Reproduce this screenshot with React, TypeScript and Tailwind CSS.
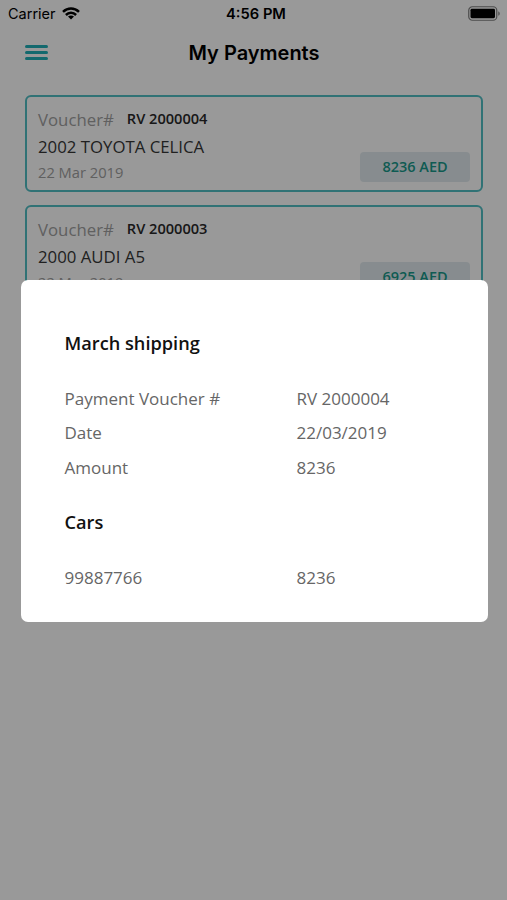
import React from "react";

type Payment = {
  voucher: string;
  car: string;
  date: string;
  amount: string;
};

const payments: Payment[] = [
  { voucher: "RV 2000004", car: "2002 TOYOTA CELICA", date: "22 Mar 2019", amount: "8236 AED" },
  { voucher: "RV 2000003", car: "2000 AUDI A5", date: "22 Mar 2019", amount: "6925 AED" },
];

const details = [
  { label: "Payment Voucher #", value: "RV 2000004" },
  { label: "Date", value: "22/03/2019" },
  { label: "Amount", value: "8236" },
];

const cars = [{ label: "99887766", value: "8236" }];

function WifiIcon() {
  return (
    <svg width="18" height="13" viewBox="0 0 18 13" fill="none" stroke="#000" strokeWidth="2.5">
      <path d="M1 4.9C5.6.5 12.4.5 17 4.9" />
      <path d="M3.9 8C6.8 5.1 11.2 5.1 14.1 8" />
      <path d="M9 12.6 6 9.6C7.6 8.2 10.4 8.2 12 9.6Z" fill="#000" stroke="none" />
    </svg>
  );
}

function BatteryIcon() {
  return (
    <svg width="33" height="15" viewBox="0 0 33 15" fill="none">
      <rect x="0.75" y="0.75" width="28" height="13.5" rx="3.6" stroke="#000" strokeOpacity="0.5" strokeWidth="1.2" />
      <rect x="2.5" y="2.8" width="24.5" height="9.4" rx="1.4" fill="#000" />
      <path d="M30.3 5.2C32.2 6 32.2 9 30.3 9.8Z" fill="#000" fillOpacity="0.5" />
    </svg>
  );
}

function StatusBar() {
  return (
    <div className="grid h-[27px] grid-cols-3 items-center pl-[8px] pr-[6px] font-['Inter',sans-serif] text-[14.5px] text-black">
      <div className="flex items-center gap-[6px]">
        <span>Carrier</span>
        <WifiIcon />
      </div>
      <span className="pt-px pl-[3px] text-center text-[14.7px] font-semibold">4:56 PM</span>
      <div className="flex justify-end">
        <BatteryIcon />
      </div>
    </div>
  );
}

function Header() {
  return (
    <header className="grid h-[50px] grid-cols-[1fr_auto_1fr] items-center pr-[24px] pl-[25px]">
      <button className="flex w-[23px] flex-col gap-[3px]" aria-label="Menu">
        <span className="h-[3px] rounded-full bg-[#20b0b8]" />
        <span className="h-[3px] rounded-full bg-[#20b0b8]" />
        <span className="h-[3px] rounded-full bg-[#20b0b8]" />
      </button>
      <h1 className="pt-[2px] font-['Inter',sans-serif] text-[20px] font-semibold text-black">My Payments</h1>
    </header>
  );
}

function PaymentCard({ payment }: { payment: Payment }) {
  return (
    <div className="flex h-[97px] items-end justify-between rounded-[6px] border-2 border-[#50bec4] px-[11px]">
      <div className="h-full pt-[9px]">
        <div className="flex h-[26px] items-center gap-[13px]">
          <span className="pt-px text-[16.8px] text-[#a0a0a0]">Voucher#</span>
          <span className="text-[14.6px] font-semibold text-[#282828]">{payment.voucher}</span>
        </div>
        <p className="pt-px text-[16.8px] leading-[28px] text-[#363636]">{payment.car}</p>
        <p className="text-[14.7px] leading-[22px] text-[#a0a0a0]">{payment.date}</p>
      </div>
      <div className="mb-[8px] flex h-[30px] w-[110px] items-center justify-center rounded-[4px] bg-[#e2eaee] text-[14.5px] font-semibold text-[#18988a]">
        {payment.amount}
      </div>
    </div>
  );
}

function DetailRow({ label, value }: { label: string; value: string }) {
  return (
    <div className="grid h-[34.7px] grid-cols-[232px_1fr] items-center text-[17px] text-[#666]">
      <span>{label}</span>
      <span>{value}</span>
    </div>
  );
}

function PaymentModal() {
  return (
    <div className="fixed inset-0 flex items-center justify-center bg-black/40 pt-[1.5px] pl-px">
      <div className="h-[342.5px] w-[467px] rounded-[7px] bg-white px-[44px] pt-[49px]">
        <h2 className="text-[18.2px] leading-[28px] font-semibold text-[#111]">March shipping</h2>
        <div className="mt-[24.6px]">
          {details.map((row) => (
            <DetailRow key={row.label} {...row} />
          ))}
        </div>
        <h2 className="mt-[22.6px] text-[18.2px] leading-[28px] font-semibold text-[#111]">Cars</h2>
        <div className="mt-[24.5px]">
          {cars.map((row) => (
            <DetailRow key={row.label} {...row} />
          ))}
        </div>
      </div>
    </div>
  );
}

export default function App() {
  return (
    <div className="h-screen overflow-hidden bg-white font-['Open_Sans',sans-serif]">
      <StatusBar />
      <Header />
      <main className="flex flex-col gap-[13px] pt-[18px] pr-[24px] pl-[25px]">
        {payments.map((payment) => (
          <PaymentCard key={payment.voucher} payment={payment} />
        ))}
      </main>
      <PaymentModal />
    </div>
  );
}
